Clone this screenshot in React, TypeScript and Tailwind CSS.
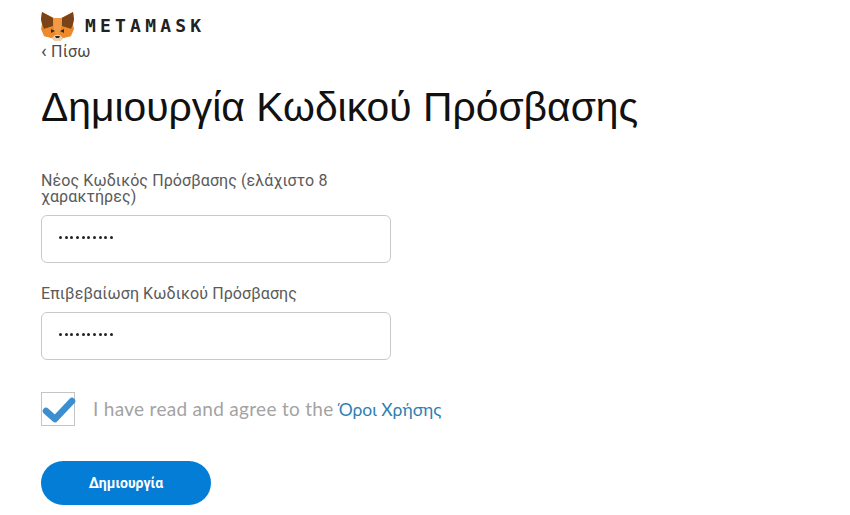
import React from "react";

const FoxLogo = () => (
  <svg width="33" height="29" viewBox="0 0 33 29" className="shrink-0">
    <path d="M1 0 L13 6 H20 L32 0 L33 7 L32 12 L33 17 L30 24 L22 26 L19 29 H14 L11 26 L3 24 L0 17 L1 12 L0 7 Z" fill="#e88a2a" />
    <path d="M1 0 L12 6 L12 14 L3 17 L1 12 L0 7 Z" fill="#7a4318" />
    <path d="M32 0 L21 6 L21 14 L30 17 L32 12 L33 7 Z" fill="#7a4318" />
    <path d="M12 6 H21 L20 18 L18 23 H15 L13 18 Z" fill="#f29a45" />
    <path d="M3 17 L10 15 L13 20 L11 26 L3 24 Z" fill="#ef8a2c" />
    <path d="M30 17 L23 15 L20 20 L22 26 L30 24 Z" fill="#ef8a2c" />
    <path d="M10 17 L14 19 L10 21 Z" fill="#3a2a1c" />
    <path d="M23 17 L19 19 L23 21 Z" fill="#3a2a1c" />
    <path d="M11 26 L14 23 H19 L22 26 L19 29 H14 Z" fill="#e8cfb6" />
    <path d="M14 24 H19 L18 26 H15 Z" fill="#2f241c" />
  </svg>
);

const Dots = () => (
  <div className="flex gap-[2.67px] pb-[3px]">
    {Array.from({ length: 10 }).map((_, i) => (
      <span key={i} className="w-[3px] h-[3px] rounded-full bg-[#222]" />
    ))}
  </div>
);

const Field = ({ label }: { label: string }) => (
  <div className="w-[350px]">
    <div className="mb-[10px] text-[16px] leading-[16px] text-[#5a5a5a] tracking-[0.1px] pr-[40px]">{label}</div>
    <div className="h-[48px] border border-[#c9c9c9] rounded-[6px] flex items-center pl-[17px] bg-white">
      <Dots />
    </div>
  </div>
);

export default function App() {
  return (
    <div className="w-[850px] h-[515px] bg-white pl-[41px] pt-[12px] overflow-hidden font-['Roboto',sans-serif]">
      <div className="flex items-center h-[28px]">
        <FoxLogo />
        <span className="ml-[11px] text-[18px] font-bold tracking-[4.2px] text-[#222] font-['DejaVu_Sans_Mono',monospace] leading-none">METAMASK</span>
      </div>
      <div className="h-[24px] text-[16px] leading-[24px] text-[#4a4a4a] tracking-[0.2px]">
        <span className="text-[19px] leading-none">‹</span> Πίσω
      </div>
      <h1 className="mt-[18px] text-[40.85px] leading-[50px] text-[#111] font-['Liberation_Sans',sans-serif] font-normal whitespace-nowrap">
        Δημιουργία Κωδικού Πρόσβασης
      </h1>
      <div className="mt-[41px] flex flex-col gap-[23px]">
        <Field label="Νέος Κωδικός Πρόσβασης (ελάχιστο 8 χαρακτήρες)" />
        <Field label="Επιβεβαίωση Κωδικού Πρόσβασης" />
      </div>
      <div className="mt-[32px] flex items-center">
        <div className="w-[34px] h-[34px] border border-[#c4c4c4]">
          <svg width="34" height="34" viewBox="0 0 34 34" className="overflow-visible">
            <path d="M4 18 L13 26 L30 8" fill="none" stroke="#3b8fd0" strokeWidth="6.5" strokeLinecap="round" strokeLinejoin="round" />
          </svg>
        </div>
        <span className="ml-[18px] text-[19px] tracking-[0.3px] text-[#a3a3a3] font-['Lato',sans-serif] whitespace-nowrap">
          I have read and agree to the <span className="text-[17.5px] tracking-normal text-[#2f7fb5]">Όροι Χρήσης</span>
        </span>
      </div>
      <button className="mt-[35px] w-[170px] h-[44px] rounded-full bg-[#037dd6] text-white text-[14px] font-bold flex items-center justify-center font-['Roboto',sans-serif]">
        Δημιουργία
      </button>
    </div>
  );
}
